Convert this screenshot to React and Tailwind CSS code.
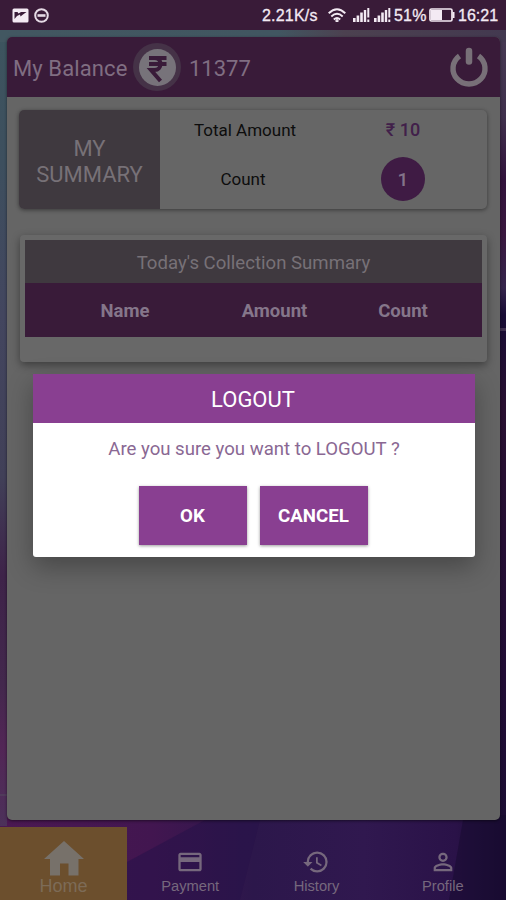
import React from 'react';
import { MdCreditCard, MdHistory, MdPersonOutline } from 'react-icons/md';

const tabs = [
  { label: 'Payment', icon: MdCreditCard },
  { label: 'History', icon: MdHistory },
  { label: 'Profile', icon: MdPersonOutline },
];

function SignalIcon() {
  return (
    <svg width="17" height="14" viewBox="0 0 17 14" fill="#f3eaf3">
      <rect x="0" y="10" width="2.6" height="4" />
      <rect x="3.6" y="7.5" width="2.6" height="6.5" />
      <rect x="7.2" y="4.5" width="2.6" height="9.5" />
      <rect x="10.8" y="2" width="2.4" height="12" />
      <rect x="14.3" y="0" width="2" height="9.5" />
      <rect x="14.3" y="11.5" width="2" height="2.5" />
    </svg>
  );
}

function StatusBar() {
  return (
    <div className="h-[30px] shrink-0 bg-[#391b38] flex items-center justify-between pl-3 pr-[7px] text-[#f3eaf3]">
      <div className="flex items-center gap-[5px]">
        <svg width="17" height="15" viewBox="0 0 17 15">
          <rect x="0.5" y="0.5" width="16" height="14" rx="1.5" fill="#f3eaf3" />
          <path d="M2.500 4h3l1 1.500L9 4h5.500L11 6.500 8.500 8.500 8 6.500 5 8 2.500 11z" fill="#391b38" />
        </svg>
        <svg width="15" height="15" viewBox="0 0 15 15" fill="none" stroke="#e6dbe6">
          <circle cx="7.500" cy="7.500" r="6.300" strokeWidth="2" />
          <path d="M3.500 7.500h8" strokeWidth="2.600" />
        </svg>
      </div>
      <div className="flex items-center font-['Liberation_Sans',sans-serif] text-[16px] leading-none [-webkit-text-stroke:0.3px_#f3eaf3]">
        <span className="w-[57px] whitespace-nowrap pt-[2px] tracking-[0.2px]">2.21K/s</span>
        <svg className="ml-[9px] mr-[7px]" width="18" height="14" viewBox="0 0 18 14" fill="none" stroke="#f3eaf3" strokeWidth="1.900">
          <path d="M0.700 5.200Q9-2.800 17.300 5.200" />
          <path d="M3.300 8.500Q9 3 14.700 8.500" />
          <path d="M5.800 11.500Q9 8.600 12.200 11.500" />
          <circle cx="9" cy="12.700" r="0.700" />
        </svg>
        <SignalIcon />
        <span className="w-1" />
        <SignalIcon />
        <span className="ml-[3px] w-[33px] whitespace-nowrap pt-[2px] tracking-[0.2px]">51%</span>
        <svg className="ml-[2px] mr-[3px]" width="26" height="14" viewBox="0 0 26 14">
          <rect x="1" y="1" width="22" height="12" rx="1.500" fill="none" stroke="#f3eaf3" strokeWidth="1.700" />
          <rect x="2" y="2" width="11" height="10" fill="#f3eaf3" />
          <rect x="23.500" y="4" width="2" height="6" fill="#f3eaf3" />
        </svg>
        <span className="w-[41px] whitespace-nowrap pt-[2px]">16:21</span>
      </div>
    </div>
  );
}

function Header() {
  return (
    <div className="h-[60px] bg-[#391b39] rounded-t-[5px] flex items-center pl-[6px] pr-[11px] text-[22px] text-[#806e82]">
      <span className="w-[116px] whitespace-nowrap tracking-[0.1px] pt-[2px]">My Balance</span>
      <span className="ml-[4px] w-[48px] h-[48px] rounded-full bg-[#453247] flex items-center justify-center">
        <svg width="37" height="37" viewBox="0 0 37 37">
          <circle cx="18.500" cy="18.500" r="18.500" fill="#77737a" />
          <path d="M10 9h17.500M10 15h17.500M12 9h3.500c8 0 8 12 0 12h-3.500l9.500 11" fill="none" stroke="#391b39" strokeWidth="4" />
        </svg>
      </span>
      <span className="ml-[8px] whitespace-nowrap pt-[2px]">11377</span>
      <svg className="ml-auto" width="40" height="40" viewBox="0 0 40 40" fill="none" stroke="#787078">
        <path d="M10.500 9A16 15.500 0 1 0 29.500 9" strokeWidth="5.400" />
        <path d="M20 4v10.500" strokeWidth="6.500" strokeLinecap="round" />
      </svg>
    </div>
  );
}

function SummaryCard() {
  return (
    <div className="mt-[13px] ml-[12px] mr-[13px] h-[99px] flex rounded-[5px] bg-[#666666] shadow-[0_1px_4px_rgba(0,0,0,0.45)] overflow-hidden">
      <div className="w-[141px] bg-[#3f393f] text-[#777177] text-[22px] leading-[26px] text-center flex items-center justify-center pt-[4px]">
        MY<br />SUMMARY
      </div>
      <div className="flex-1 grid grid-cols-[170px_146px] grid-rows-[40px_59px] text-[17px] text-[#0d0d0d] text-center">
        <span className="self-center pt-[1px]">Total Amount</span>
        <span className="self-center pb-[2px] text-[18px] font-medium text-[#41204a]">₹ 10</span>
        <span className="self-center pr-[4px]">Count</span>
        <span className="self-start mt-[7px] justify-self-center w-[44px] h-[44px] rounded-full bg-[#3f1b44] text-[#83748a] text-[19px] font-medium flex items-center justify-center pt-[2px]">1</span>
      </div>
    </div>
  );
}

function CollectionCard() {
  return (
    <div className="mt-[26px] ml-[13px] mr-[13px] h-[127px] rounded-[4px] bg-[#686868] shadow-[0_3px_8px_rgba(0,0,0,0.4)] px-[5px] pt-[5px]">
      <div className="h-[43px] bg-[#3f393f] text-[#777177] text-[18.6px] flex items-center justify-center pt-[4px]">
        Today's Collection Summary
      </div>
      <div className="h-[54px] bg-[#391b39] text-[#85768a] text-[18.5px] font-bold flex items-center pt-[4px]">
        <span className="w-[200px] text-center">Name</span>
        <span className="w-[99px] text-center">Amount</span>
        <span className="w-[158px] text-center">Count</span>
      </div>
    </div>
  );
}

function LogoutDialog() {
  return (
    <div className="absolute left-[33px] top-[374px] w-[442px] h-[183px] rounded-b-[3px] bg-white overflow-hidden shadow-[0_10px_26px_rgba(0,0,0,0.3)] flex flex-col items-center">
      <div className="w-full h-[49px] bg-[#893f91] text-white text-[22px] flex items-center justify-center pt-[2px] pr-[2px]">LOGOUT</div>
      <p className="mt-[13px] h-[26px] leading-[27px] text-[18.6px] text-[#8a6893]">Are you sure you want to LOGOUT ?</p>
      <div className="mt-[24px] mr-[2px] flex gap-[13px] text-[18.7px] font-bold text-white">
        <button className="w-[108px] h-[59px] pt-[2px] bg-[#893f91] shadow-[0_1px_3px_rgba(0,0,0,0.4)]">OK</button>
        <button className="w-[108px] h-[59px] pt-[2px] bg-[#893f91] shadow-[0_1px_3px_rgba(0,0,0,0.4)]">CANCEL</button>
      </div>
    </div>
  );
}

function BottomNav() {
  return (
    <div className="mt-[7px] h-[73px] flex font-['Liberation_Sans',sans-serif] text-[#76687d]">
      <div className="w-[127px] bg-[#6c4f2d] flex flex-col items-center text-[18px] text-[#7d6b57]">
        <svg className="mt-[14px]" width="40" height="35" viewBox="0 0 40 35" fill="#77716a">
          <path d="M20 0L40 18H34.500V34.500H24.500V22.500H16V34.500H6V18H0z" />
        </svg>
        <span className="leading-[18px] mt-[1px]">Home</span>
      </div>
      {tabs.map(({ label, icon: Icon }) => (
        <div key={label} className="flex-1 flex flex-col items-center text-[14.7px]">
          <Icon className="mt-[21px] w-[28px] h-[28px]" />
          <span className="leading-[18px] mt-[1px]">{label}</span>
        </div>
      ))}
    </div>
  );
}

export default function App() {
  return (
    <div className="relative w-[506px] h-[900px] overflow-hidden flex flex-col font-[Roboto,sans-serif] bg-[#301650]">
      {/* wallpaper, seen along the edges and behind the tabs */}
      <svg className="absolute inset-0" width="506" height="900" viewBox="0 0 506 900">
        <defs>
          <linearGradient id="left" x1="0" y1="0" x2="0" y2="1">
            <stop offset="0" stopColor="#3d565f" />
            <stop offset="0.18" stopColor="#3d4f5e" />
            <stop offset="0.35" stopColor="#43465f" />
            <stop offset="0.53" stopColor="#414058" />
            <stop offset="0.64" stopColor="#3e2349" />
            <stop offset="0.76" stopColor="#43284d" />
            <stop offset="0.83" stopColor="#522656" />
            <stop offset="0.92" stopColor="#4c315a" />
            <stop offset="1" stopColor="#441747" />
          </linearGradient>
          <linearGradient id="right" x1="0" y1="0" x2="0" y2="1">
            <stop offset="0" stopColor="#493e55" />
            <stop offset="0.13" stopColor="#40304d" />
            <stop offset="0.2" stopColor="#32133c" />
            <stop offset="0.26" stopColor="#3a173f" />
            <stop offset="0.32" stopColor="#35254c" />
            <stop offset="0.35" stopColor="#180c35" />
            <stop offset="0.45" stopColor="#291031" />
            <stop offset="0.75" stopColor="#210c35" />
            <stop offset="1" stopColor="#190d32" />
          </linearGradient>
          <linearGradient id="top">
            <stop offset="0" stopColor="#425761" />
            <stop offset="0.55" stopColor="#415661" />
            <stop offset="0.68" stopColor="#4c4150" />
            <stop offset="1" stopColor="#433950" />
          </linearGradient>
          <linearGradient id="bottom">
            <stop offset="0" stopColor="#4b1852" />
            <stop offset="0.3" stopColor="#421650" />
            <stop offset="0.5" stopColor="#2c174b" />
            <stop offset="0.72" stopColor="#30184f" />
            <stop offset="0.9" stopColor="#2a1248" />
            <stop offset="1" stopColor="#170b2e" />
          </linearGradient>
        </defs>
        <rect width="30" height="900" fill="url(#left)" />
        <rect x="476" width="30" height="900" fill="url(#right)" />
        <rect y="30" width="506" height="12" fill="url(#top)" />
        <path d="M7 815H506V900H0V826H7z" fill="url(#bottom)" />
        <path d="M127 862L205 820H260L240 900H127z" fill="#28134a" opacity="0.6" />
        <path d="M463 820H506V900H449z" fill="#190c32" opacity="0.6" />
        <path d="M499 328h7v3h-7zM0 794h8v2H0z" fill="#51415d" opacity="0.7" />
      </svg>
      <div className="relative flex flex-col">
        <StatusBar />
        <div className="mt-[7px] ml-[7px] mr-[6px] h-[783px] rounded-[5px] bg-[#656565] shadow-[0_1px_3px_rgba(0,0,0,0.5)]">
          <Header />
          <SummaryCard />
          <CollectionCard />
        </div>
        <BottomNav />
      </div>
      <LogoutDialog />
    </div>
  );
}
